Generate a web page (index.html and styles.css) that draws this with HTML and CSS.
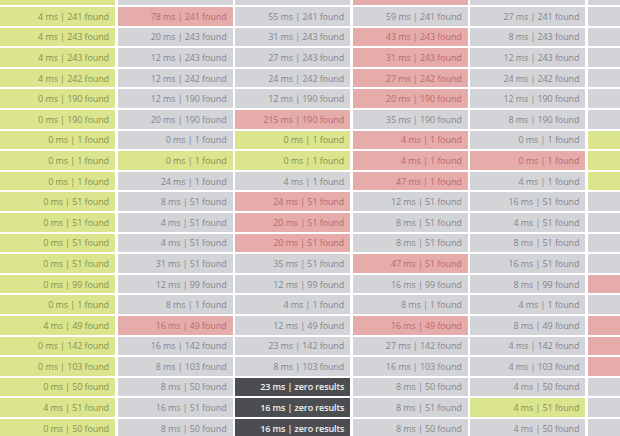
FILE: index.html
```html
<!DOCTYPE html>
<html>
<head>
<meta charset="utf-8">
<link rel="stylesheet" href="styles.css">
</head>
<body>
<div class="grid">
  <div class="c g top"></div><div class="c n top"></div><div class="c n top"></div><div class="c r top"></div><div class="c n top"></div><div class="c n top"></div>

  <div class="c g">4 ms | 241 found</div><div class="c r">78 ms | 241 found</div><div class="c n">55 ms | 241 found</div><div class="c n">59 ms | 241 found</div><div class="c n">27 ms | 241 found</div><div class="c n"></div>
  <div class="c g">4 ms | 243 found</div><div class="c n">20 ms | 243 found</div><div class="c n">31 ms | 243 found</div><div class="c r">43 ms | 243 found</div><div class="c n">8 ms | 243 found</div><div class="c n"></div>
  <div class="c g">4 ms | 243 found</div><div class="c n">12 ms | 243 found</div><div class="c n">27 ms | 243 found</div><div class="c r">31 ms | 243 found</div><div class="c n">12 ms | 243 found</div><div class="c n"></div>
  <div class="c g">4 ms | 242 found</div><div class="c n">12 ms | 242 found</div><div class="c n">24 ms | 242 found</div><div class="c r">27 ms | 242 found</div><div class="c n">24 ms | 242 found</div><div class="c n"></div>
  <div class="c g">0 ms | 190 found</div><div class="c n">12 ms | 190 found</div><div class="c n">12 ms | 190 found</div><div class="c r">20 ms | 190 found</div><div class="c n">12 ms | 190 found</div><div class="c n"></div>
  <div class="c g">0 ms | 190 found</div><div class="c n">20 ms | 190 found</div><div class="c r">215 ms | 190 found</div><div class="c n">35 ms | 190 found</div><div class="c n">8 ms | 190 found</div><div class="c n"></div>
  <div class="c g">0 ms | 1 found</div><div class="c n">0 ms | 1 found</div><div class="c g">0 ms | 1 found</div><div class="c r">4 ms | 1 found</div><div class="c n">0 ms | 1 found</div><div class="c g"></div>
  <div class="c g">0 ms | 1 found</div><div class="c g">0 ms | 1 found</div><div class="c g">0 ms | 1 found</div><div class="c r">4 ms | 1 found</div><div class="c r">0 ms | 1 found</div><div class="c g"></div>
  <div class="c g">0 ms | 1 found</div><div class="c n">24 ms | 1 found</div><div class="c n">4 ms | 1 found</div><div class="c r">47 ms | 1 found</div><div class="c n">4 ms | 1 found</div><div class="c g"></div>
  <div class="c g">0 ms | 51 found</div><div class="c n">8 ms | 51 found</div><div class="c r">24 ms | 51 found</div><div class="c n">12 ms | 51 found</div><div class="c n">16 ms | 51 found</div><div class="c n"></div>
  <div class="c g">0 ms | 51 found</div><div class="c n">4 ms | 51 found</div><div class="c r">20 ms | 51 found</div><div class="c n">8 ms | 51 found</div><div class="c n">4 ms | 51 found</div><div class="c n"></div>
  <div class="c g">0 ms | 51 found</div><div class="c n">4 ms | 51 found</div><div class="c r">20 ms | 51 found</div><div class="c n">8 ms | 51 found</div><div class="c n">8 ms | 51 found</div><div class="c n"></div>
  <div class="c g">0 ms | 51 found</div><div class="c n">31 ms | 51 found</div><div class="c n">35 ms | 51 found</div><div class="c r">47 ms | 51 found</div><div class="c n">16 ms | 51 found</div><div class="c n"></div>
  <div class="c g">0 ms | 99 found</div><div class="c n">12 ms | 99 found</div><div class="c n">12 ms | 99 found</div><div class="c n">16 ms | 99 found</div><div class="c n">8 ms | 99 found</div><div class="c r"></div>
  <div class="c g">0 ms | 1 found</div><div class="c n">8 ms | 1 found</div><div class="c n">4 ms | 1 found</div><div class="c n">8 ms | 1 found</div><div class="c n">4 ms | 1 found</div><div class="c n"></div>
  <div class="c g">4 ms | 49 found</div><div class="c r">16 ms | 49 found</div><div class="c n">12 ms | 49 found</div><div class="c r">16 ms | 49 found</div><div class="c n">8 ms | 49 found</div><div class="c r"></div>
  <div class="c g">0 ms | 142 found</div><div class="c n">16 ms | 142 found</div><div class="c n">23 ms | 142 found</div><div class="c n">27 ms | 142 found</div><div class="c n">4 ms | 142 found</div><div class="c r"></div>
  <div class="c g">0 ms | 103 found</div><div class="c n">8 ms | 103 found</div><div class="c n">8 ms | 103 found</div><div class="c n">16 ms | 103 found</div><div class="c n">4 ms | 103 found</div><div class="c r"></div>
  <div class="c g">0 ms | 50 found</div><div class="c n">8 ms | 50 found</div><div class="c d">23 ms | zero results</div><div class="c n">8 ms | 50 found</div><div class="c n">4 ms | 50 found</div><div class="c n"></div>
  <div class="c g">4 ms | 51 found</div><div class="c n">16 ms | 51 found</div><div class="c d">16 ms | zero results</div><div class="c n">8 ms | 51 found</div><div class="c g">4 ms | 51 found</div><div class="c n"></div>
  <div class="c g">0 ms | 50 found</div><div class="c n">8 ms | 50 found</div><div class="c d">16 ms | zero results</div><div class="c n">8 ms | 50 found</div><div class="c n">4 ms | 50 found</div><div class="c n"></div>
</div>
</body>
</html>
```
FILE: styles.css
```css
html, body {
  margin: 0;
  padding: 0;
  background: #ffffff;
  overflow: hidden;
}
body {
  width: 620px;
  height: 436px;
  font-family: "Open Sans", "Lato", sans-serif;
}
.grid {
  display: grid;
  grid-template-columns: repeat(5, 115px) 32px;
  column-gap: 2.6px;
  row-gap: 2px;
  grid-auto-rows: 18.6px;
  margin-top: -13.6px;
  width: 620px;
}
.c {
  display: flex;
  align-items: center;
  justify-content: flex-end;
  padding-right: 6px;
  font-size: 9px;
  letter-spacing: -0.1px;
  white-space: nowrap;
  overflow: hidden;
}
.g {
  background: #dbe58e;
  color: #8a8f4e;
}
.n {
  background: #d3d4d8;
  color: #85868b;
}
.r {
  background: #e6abab;
  color: #b56b6b;
}
.d {
  background: #4b4d51;
  color: #f2f2f2;
  font-weight: 600;
}
```
